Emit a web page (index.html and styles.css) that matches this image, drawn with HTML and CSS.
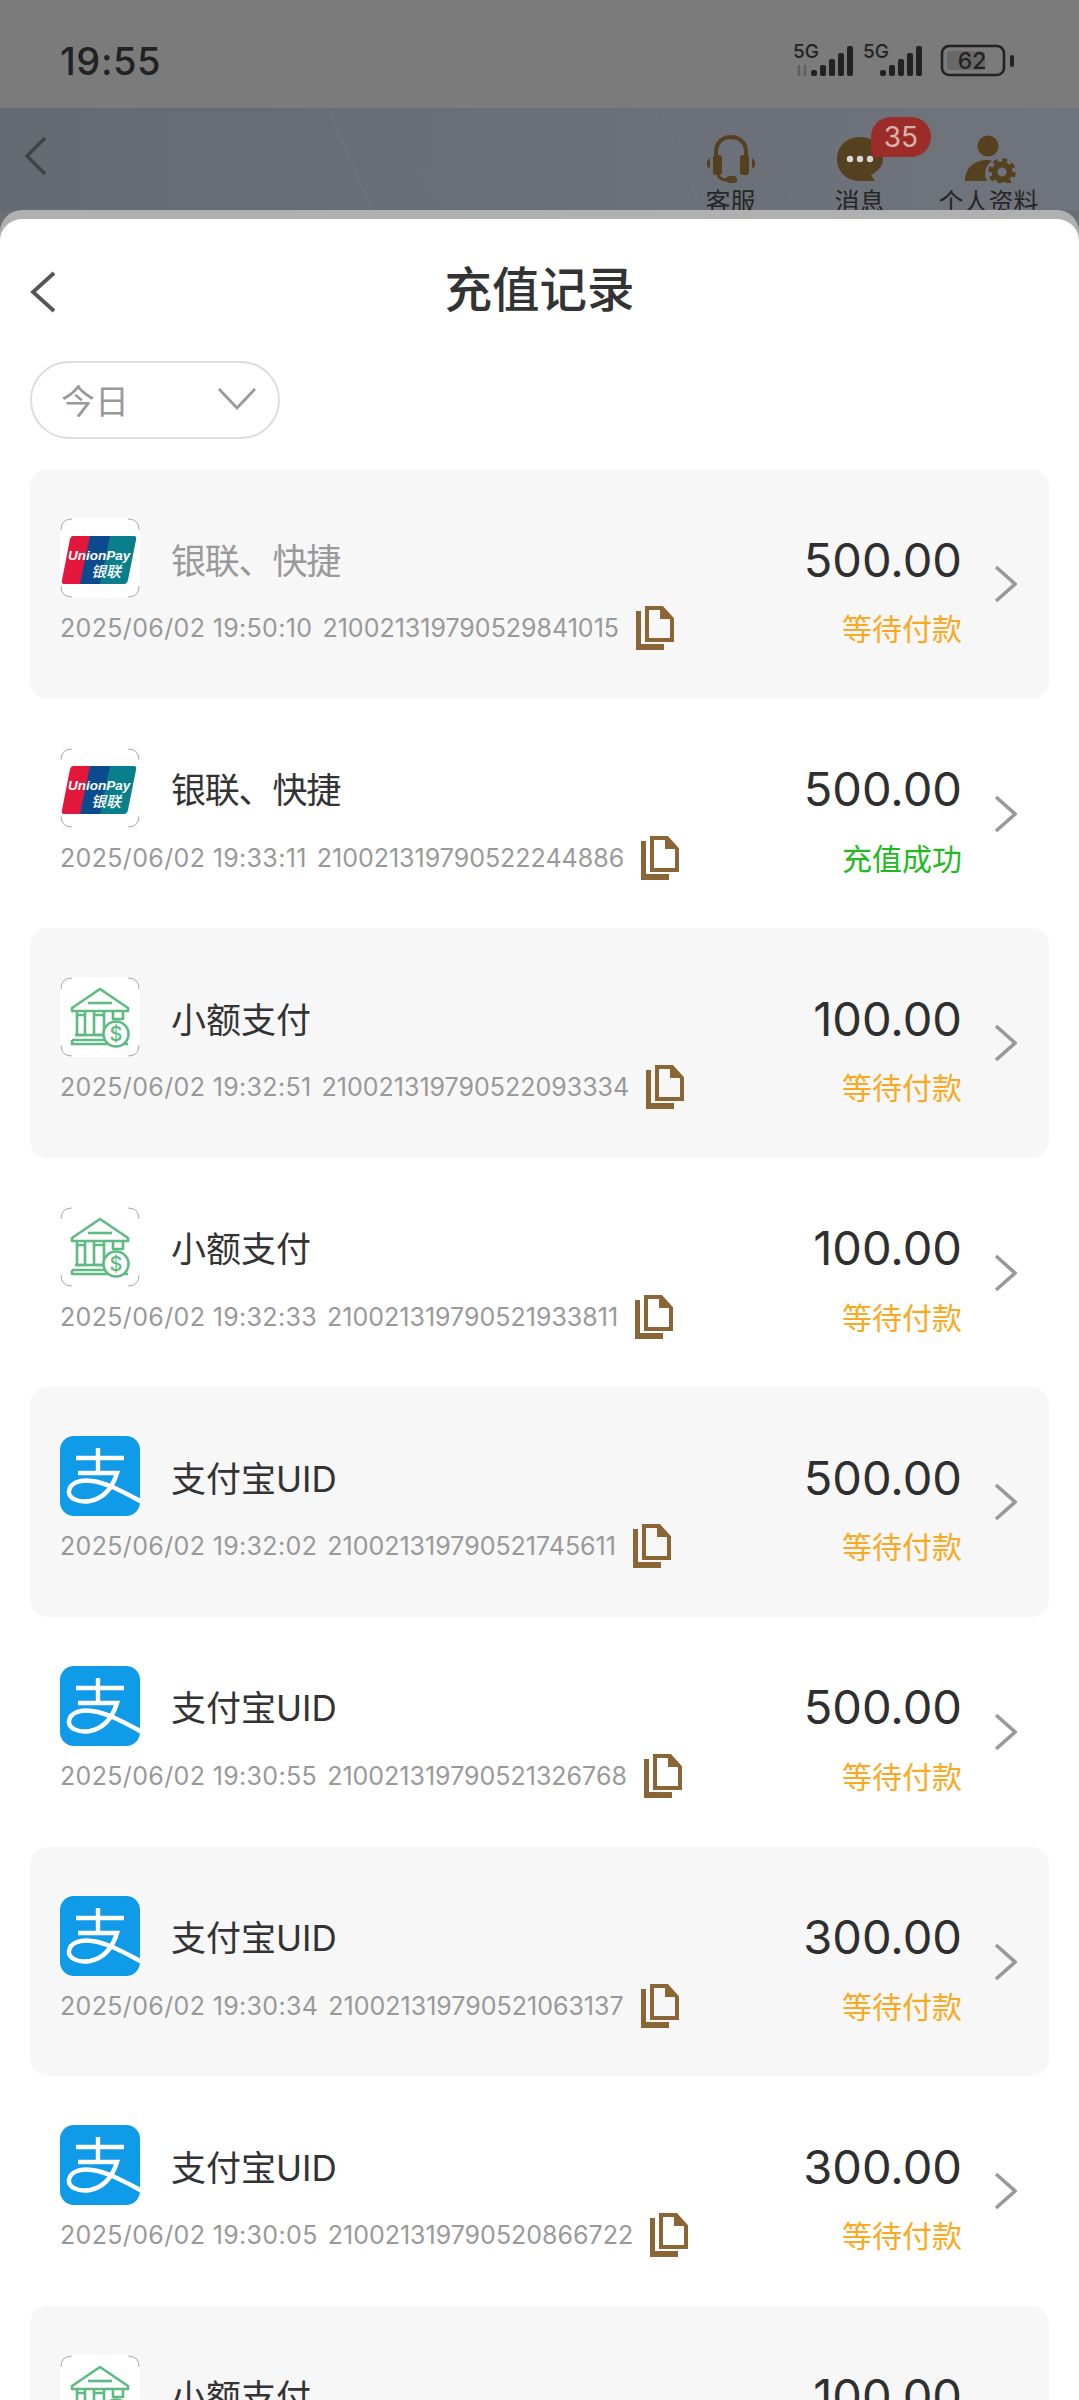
FILE: index.html
```html
<!DOCTYPE html>
<html>
<head>
  <title>充值记录</title>
  <link rel="stylesheet" href="styles.css">
</head>
<body>
  <!-- Shared icons -->
  <svg class="defs" width="0" height="0">
    <symbol id="i-unionpay" viewBox="0 0 80 80">
      <rect width="80" height="80" rx="14" fill="#fff"/>
      <path d="M1 12 Q1 1 12 1 M68 1 Q79 1 79 12 M1 68 Q1 79 12 79 M68 79 Q79 79 79 68" fill="none" stroke="#aaa" stroke-width="1"/>
      <path d="M13 18 H34 L24 66 H4 Q1 66 2 62 L10 21 Q11 18 13 18 Z" fill="#e2173b"/>
      <path d="M30 18 H55 L45 66 H20 Z" fill="#0b4a8c"/>
      <path d="M50 18 H74 Q77 18 76 22 L68 62 Q67 66 64 66 H40 Z" fill="#0a7f8c"/>
    </symbol>
    <symbol id="i-bank" viewBox="0 0 80 80">
      <rect width="80" height="80" rx="14" fill="#fff"/>
      <path d="M1 12 Q1 1 12 1 M68 1 Q79 1 79 12 M1 68 Q1 79 12 79 M68 79 Q79 79 79 68" fill="none" stroke="#aaa" stroke-width="1"/>
      <g fill="none" stroke="#5dbb82" stroke-width="2.6" stroke-linejoin="round">
        <path d="M40 12 L68 31 V34 H12 V31 Z"/>
        <path d="M28 26 H52"/>
        <path d="M17 34 V38 H25 V34 M17 38 V58 H25 V38"/>
        <path d="M34 34 V38 H44 V34 M34 38 V58 H44 V38"/>
        <path d="M53 34 V42 H63 V34"/>
        <path d="M15 58 H44 M12 63 H45 M12 63 V67 H68"/>
      </g>
      <circle cx="56" cy="57" r="12.5" fill="#fff" stroke="#5dbb82" stroke-width="2.6"/>
    </symbol>
    <symbol id="i-alipay" viewBox="0 0 80 80">
      <clipPath id="ali-clip"><rect width="80" height="80" rx="14"/></clipPath>
      <g clip-path="url(#ali-clip)">
        <rect width="80" height="80" fill="#109be8"/>
        <path d="M16 22 H64 M38 12 V37 M18 37 H57 C53 50 45 62 30 65 C18 67 8 62 9 55 C10 47 20 43 32 45 C48 47 65 57 82 66" fill="none" stroke="#fff" stroke-width="4.4"/>
      </g>
    </symbol>
    <symbol id="i-copy" viewBox="0 0 38 44">
      <path d="M0 5 H5 V38 H28 V44 H0 Z" fill="#8a6535"/>
      <path d="M11 2 H26 L36 13 V34 H11 Z" fill="none" stroke="#8a6535" stroke-width="4"/>
      <path d="M24 0 L38 13 H24 Z" fill="#8a6535"/>
    </symbol>
    <symbol id="i-next" viewBox="0 0 23 38">
      <path d="M2 2 L21 19 L2 36" fill="none" stroke="#999" stroke-width="3.6"/>
    </symbol>
  </svg>

  <div class="page">
    <!-- Status bar -->
    <div class="status-bar">
      <span class="clock">19:55</span>
      <svg class="status-icons" width="212" height="34" viewBox="0 0 212 34">
        <text x="-3" y="14" class="net">5G</text>
        <path d="M3 21 V32 M9 21 V32" stroke="#5f5f5f" stroke-width="2.4"/>
        <g fill="#222">
          <rect x="15" y="26" width="6" height="6" rx="2"/>
          <rect x="24" y="21" width="6" height="11" rx="2"/>
          <rect x="33" y="15" width="6" height="17" rx="2"/>
          <rect x="42" y="9" width="6" height="23" rx="2"/>
          <rect x="51" y="2" width="6" height="30" rx="2"/>
        </g>
        <text x="67" y="14" class="net">5G</text>
        <g fill="#222">
          <rect x="84" y="26" width="6" height="6" rx="2"/>
          <rect x="93" y="21" width="6" height="11" rx="2"/>
          <rect x="102" y="15" width="6" height="17" rx="2"/>
          <rect x="111" y="9" width="6" height="23" rx="2"/>
          <rect x="120" y="2" width="6" height="30" rx="2"/>
        </g>
        <rect x="146" y="2" width="62" height="29" rx="7" fill="none" stroke="#222" stroke-width="2.6"/>
        <rect x="151" y="7" width="38" height="19" rx="3" fill="#686868"/>
        <text x="176" y="25" class="batt">62</text>
      </svg>
      <span class="batt-tip"></span>
    </div>

    <!-- App header behind the sheet -->
    <div class="top-bar">
      <svg class="top-lines" width="1079" height="102" viewBox="0 0 1079 102">
        <path d="M328 0 L372 102 M420 60 L447 102 M660 0 L702 102 M770 60 L800 102" stroke="#6f757c" stroke-width="1.2" fill="none"/>
      </svg>
      <svg class="top-back" width="24" height="40" viewBox="0 0 24 40"><path d="M21 2 L3 20 L21 38" fill="none" stroke="#3f4347" stroke-width="3.4"/></svg>
      <div class="top-actions">
        <div class="top-action">
          <svg width="54" height="48" viewBox="0 0 54 48">
            <path d="M12 24 V17 C12 7 19 2 27 2 C35 2 42 7 42 17 V24" fill="none" stroke="#55401f" stroke-width="4"/>
            <rect x="9" y="20" width="9" height="20" rx="3" fill="#55401f"/>
            <rect x="36" y="20" width="9" height="20" rx="3" fill="#55401f"/>
            <path d="M3 26 L6 23 V34 L3 31 Z M51 26 L48 23 V34 L51 31 Z" fill="#55401f"/>
            <path d="M14 40 C15 43 18 45 24 45" fill="none" stroke="#55401f" stroke-width="3"/>
            <rect x="22" y="41" width="11" height="7" rx="3.5" fill="#55401f"/>
          </svg>
          <span>客服</span>
        </div>
        <div class="top-action">
          <svg width="54" height="48" viewBox="0 0 54 48">
            <path d="M27 2 C14 2 4 11 4 24 C4 37 14 46 27 46 H42 L38 40 C45 36 50 31 50 24 C50 11 40 2 27 2 Z" fill="#55401f"/>
            <circle cx="17" cy="24" r="3.2" fill="#d8d8d8"/>
            <circle cx="27" cy="24" r="3.2" fill="#d8d8d8"/>
            <circle cx="37" cy="24" r="3.2" fill="#d8d8d8"/>
          </svg>
          <span>消息</span>
          <div class="badge">35</div>
        </div>
        <div class="top-action">
          <svg width="54" height="48" viewBox="0 0 54 48">
            <circle cx="26" cy="11" r="10.5" fill="#55401f"/>
            <path d="M3 46 C3 33 12 25 26 25 C27 25 29 25 30 26 C24 30 21 38 25 46 Z" fill="#55401f"/>
            <circle cx="40" cy="37" r="7.5" fill="none" stroke="#55401f" stroke-width="6"/>
            <circle cx="40" cy="37" r="12" fill="none" stroke="#55401f" stroke-width="3.5" stroke-dasharray="5 4.4"/>
          </svg>
          <span>个人资料</span>
        </div>
      </div>
    </div>

    <!-- Records sheet -->
    <div class="sheet-back">
      <div class="sheet">
        <div class="sheet-title">
          <svg class="sheet-back-btn" width="26" height="42" viewBox="0 0 26 42"><path d="M24 2 L3 21 L24 40" fill="none" stroke="#555" stroke-width="3.8"/></svg>
          <h1>充值记录</h1>
        </div>

        <div class="filter">
          <span>今日</span>
          <svg width="38" height="22" viewBox="0 0 38 22"><path d="M1 1 L19 20 L37 1" fill="none" stroke="#999" stroke-width="2.8"/></svg>
        </div>

        <div class="record alt">
          <svg class="pay-icon" viewBox="0 0 80 80"><use href="#i-unionpay"/><text x="8" y="42" class="up-latin">UnionPay</text><text x="31" y="59" class="up-cjk">银联</text></svg>
          <span class="pay-name tight muted">银联、快捷</span>
          <div class="meta"><span class="when">2025/06/02 19:50:10</span><span>210021319790529841015</span><svg class="copy"><use href="#i-copy"/></svg></div>
          <div class="amount">500.00</div>
          <div class="state wait">等待付款</div>
          <svg class="next"><use href="#i-next"/></svg>
        </div>

        <div class="record">
          <svg class="pay-icon" viewBox="0 0 80 80"><use href="#i-unionpay"/><text x="8" y="42" class="up-latin">UnionPay</text><text x="31" y="59" class="up-cjk">银联</text></svg>
          <span class="pay-name tight">银联、快捷</span>
          <div class="meta"><span class="when">2025/06/02 19:33:11</span><span>210021319790522244886</span><svg class="copy"><use href="#i-copy"/></svg></div>
          <div class="amount">500.00</div>
          <div class="state done">充值成功</div>
          <svg class="next"><use href="#i-next"/></svg>
        </div>

        <div class="record alt">
          <svg class="pay-icon" viewBox="0 0 80 80"><use href="#i-bank"/><text x="56" y="64" class="bank-sign">$</text></svg>
          <span class="pay-name">小额支付</span>
          <div class="meta"><span class="when">2025/06/02 19:32:51</span><span>210021319790522093334</span><svg class="copy"><use href="#i-copy"/></svg></div>
          <div class="amount">100.00</div>
          <div class="state wait">等待付款</div>
          <svg class="next"><use href="#i-next"/></svg>
        </div>

        <div class="record">
          <svg class="pay-icon" viewBox="0 0 80 80"><use href="#i-bank"/><text x="56" y="64" class="bank-sign">$</text></svg>
          <span class="pay-name">小额支付</span>
          <div class="meta"><span class="when">2025/06/02 19:32:33</span><span>210021319790521933811</span><svg class="copy"><use href="#i-copy"/></svg></div>
          <div class="amount">100.00</div>
          <div class="state wait">等待付款</div>
          <svg class="next"><use href="#i-next"/></svg>
        </div>

        <div class="record alt">
          <svg class="pay-icon" viewBox="0 0 80 80"><use href="#i-alipay"/></svg>
          <span class="pay-name">支付宝UID</span>
          <div class="meta"><span class="when">2025/06/02 19:32:02</span><span>210021319790521745611</span><svg class="copy"><use href="#i-copy"/></svg></div>
          <div class="amount">500.00</div>
          <div class="state wait">等待付款</div>
          <svg class="next"><use href="#i-next"/></svg>
        </div>

        <div class="record">
          <svg class="pay-icon" viewBox="0 0 80 80"><use href="#i-alipay"/></svg>
          <span class="pay-name">支付宝UID</span>
          <div class="meta"><span class="when">2025/06/02 19:30:55</span><span>210021319790521326768</span><svg class="copy"><use href="#i-copy"/></svg></div>
          <div class="amount">500.00</div>
          <div class="state wait">等待付款</div>
          <svg class="next"><use href="#i-next"/></svg>
        </div>

        <div class="record alt">
          <svg class="pay-icon" viewBox="0 0 80 80"><use href="#i-alipay"/></svg>
          <span class="pay-name">支付宝UID</span>
          <div class="meta"><span class="when">2025/06/02 19:30:34</span><span>210021319790521063137</span><svg class="copy"><use href="#i-copy"/></svg></div>
          <div class="amount">300.00</div>
          <div class="state wait">等待付款</div>
          <svg class="next"><use href="#i-next"/></svg>
        </div>

        <div class="record">
          <svg class="pay-icon" viewBox="0 0 80 80"><use href="#i-alipay"/></svg>
          <span class="pay-name">支付宝UID</span>
          <div class="meta"><span class="when">2025/06/02 19:30:05</span><span>210021319790520866722</span><svg class="copy"><use href="#i-copy"/></svg></div>
          <div class="amount">300.00</div>
          <div class="state wait">等待付款</div>
          <svg class="next"><use href="#i-next"/></svg>
        </div>

        <div class="record alt">
          <svg class="pay-icon" viewBox="0 0 80 80"><use href="#i-bank"/><text x="56" y="64" class="bank-sign">$</text></svg>
          <span class="pay-name">小额支付</span>
          <div class="amount">100.00</div>
          <svg class="next"><use href="#i-next"/></svg>
        </div>
      </div>
    </div>
  </div>
</body>
</html>
```

FILE: styles.css
```css
/* Page frame */
html, body { margin: 0; padding: 0; }
body { font-family: Inter, "Noto Sans CJK SC", sans-serif; }
.defs { position: absolute; }
.page { width: 1079px; height: 2400px; overflow: hidden; background: #6a6f76; }

/* Status bar */
.status-bar { height: 108px; background: #7b7b7b; display: flex; align-items: center; padding: 0 60px; box-sizing: border-box; }
.clock { font-size: 38px; font-weight: 500; letter-spacing: 0.6px; color: #222; margin-top: 14px; }
.status-icons { margin-left: auto; margin-right: 2px; margin-top: 14px; overflow: visible; }
.batt-tip { width: 4px; height: 12px; background: #222; border-radius: 2px; margin-right: 5px; margin-top: 14px; }
.net { font: 500 19px Inter, sans-serif; fill: #222; }
.batt { font: 500 23px Inter, sans-serif; fill: #222; text-anchor: middle; }

/* Header behind the sheet */
.top-bar { position: relative; height: 102px; overflow: hidden; display: flex; align-items: flex-start; padding-left: 24px; background: linear-gradient(90deg, #646b73, #70747c); }
.top-lines { position: absolute; left: 0; top: 0; }
.top-back { position: relative; margin-top: 28px; }
.top-actions { position: relative; margin-left: auto; display: flex; padding-top: 27px; margin-right: 26px; }
.top-action { position: relative; width: 129px; display: flex; flex-direction: column; align-items: center; font-size: 25px; color: #262626; line-height: 34px; }
.top-action span { white-space: nowrap; margin-top: 2px; }
.badge { position: absolute; left: 76px; top: -18px; width: 60px; height: 40px; border-radius: 20px 20px 20px 4px; background: #9c2c28; color: #d9b2af; font-size: 28px; line-height: 40px; text-align: center; }

/* Sheet */
.sheet-back { background: #b0b0b0; border-radius: 22px 22px 0 0; padding-top: 9px; }
.sheet { background: #fff; border-radius: 22px 22px 0 0; padding: 0 30px; }
.sheet-title { height: 142px; padding-bottom: 8px; box-sizing: border-box; display: flex; align-items: center; justify-content: center; position: relative; }
.sheet-title h1 { margin: 0; font-size: 47.5px; font-weight: 500; color: #333; }
.sheet-back-btn { position: absolute; left: 0; top: 52px; }

/* Date filter */
.filter { width: 250px; height: 78px; box-sizing: border-box; border: 2px solid #ddd; border-radius: 39px; display: flex; align-items: center; justify-content: space-between; padding: 0 22px 2px 29px; font-size: 34px; color: #999; }

/* Records */
.record { height: 229.6px; box-sizing: border-box; border-radius: 18px; padding: 49px 32px 0 30px; display: grid; grid-template-columns: 80px 1fr auto 55px; grid-template-rows: 80px 44px; row-gap: 8px; align-items: center; }
.filter + .record { margin-top: 30px; }
.alt { background: #f7f7f7; }
.pay-icon { width: 80px; height: 80px; grid-column: 1; grid-row: 1; }
.pay-name { grid-column: 2; grid-row: 1; margin-left: 31px; font-size: 35px; color: #333; }
.tight { letter-spacing: -1.2px; }
.muted { color: #999; }
.meta { grid-column: 1 / 3; grid-row: 2; display: flex; align-items: center; font-size: 25px; color: #999; white-space: nowrap; }
.when { letter-spacing: 0.35px; }
.meta span + span { margin-left: 10px; }
.copy { width: 38px; height: 44px; margin-left: 17px; }
.amount { grid-column: 3; grid-row: 1; justify-self: end; font-size: 47px; color: #2f2f2f; margin-top: 2px; }
.state { grid-column: 3; grid-row: 2; justify-self: end; font-size: 30px; margin-top: -2px; }
.wait { color: #fba922; }
.done { color: #22b922; }
.next { width: 23px; height: 38px; grid-column: 4; grid-row: 1 / 3; margin-left: 32px; }

/* Logo texts */
.up-latin { font: italic 700 13.5px "Liberation Sans", sans-serif; fill: #fff; }
.up-cjk { font: italic 500 15px "Noto Sans CJK SC", sans-serif; fill: #fff; }
.bank-sign { font: 500 20px Inter, sans-serif; fill: #5dbb82; text-anchor: middle; }
```
